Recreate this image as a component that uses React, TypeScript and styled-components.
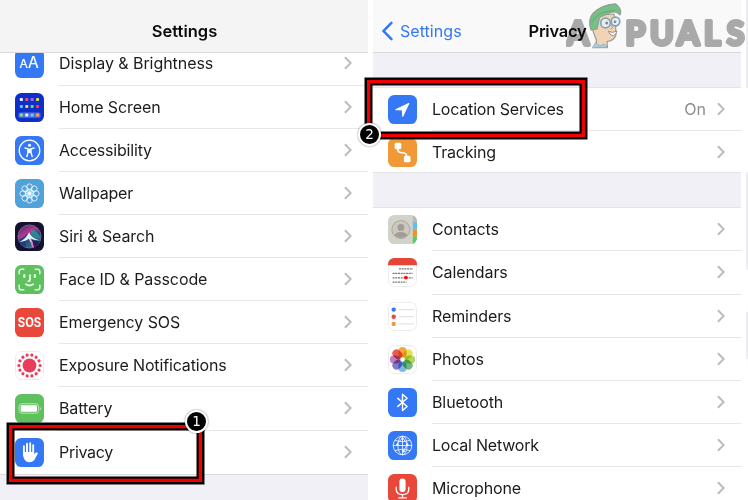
import React from "react";
import styled, { createGlobalStyle } from "styled-components";

const Global = createGlobalStyle`
  * { box-sizing: border-box; }
  body { margin: 0; background: #fff; overflow: hidden; }
`;

const Screen = styled.main`
  position: relative;
  display: grid;
  grid-template-columns: 368px 368px 2px;
  column-gap: 5px;
  width: 748px;
  height: 500px;
  overflow: hidden;
  background: #fff;
  color: #1c1c1e;
  font-family: Inter, "Liberation Sans", sans-serif;
  font-size: 16px;
`;

const Panel = styled.section`
  display: flex;
  flex-direction: column;
  min-width: 0;
  height: 500px;
  overflow: hidden;
  background: #fff;
`;

const Header = styled.header<{ $tone: string }>`
  flex: none;
  display: grid;
  grid-template-columns: 1fr auto 1fr;
  align-items: center;
  height: 53px;
  padding: 10px 8px 0 9px;
  background: ${(p) => p.$tone};
  border-bottom: 1px solid #dadadc;
  z-index: 1;
`;

const Title = styled.h1<{ $spacing: number }>`
  grid-column: 2;
  margin: 0;
  font-size: 16.5px;
  line-height: 20px;
  font-weight: 600;
  color: #0b0b0c;
  letter-spacing: ${(p) => p.$spacing}px;
`;

const Back = styled.a`
  display: flex;
  align-items: center;
  gap: 7px;
  color: #3478f6;
  letter-spacing: 0.05px;
`;

const List = styled.ul<{ $scrolled?: boolean }>`
  flex: none;
  list-style: none;
  margin: ${(p) => (p.$scrolled ? "-10.6px" : "0")} 0 0;
  padding: 0;
`;

const Gap = styled.div<{ $height: number; $overlap?: number }>`
  flex: none;
  height: ${(p) => p.$height}px;
  margin-top: -${(p) => p.$overlap ?? 0}px;
  background: #f1f0f6;
  border-bottom: 1px solid #e4e4e8;
  border-top: ${(p) => (p.$overlap ? "1px solid #e4e4e8" : "none")};
`;

const Fill = styled.div`
  flex: 1;
  background: #f1f0f6;
  border-top: 1px solid #dcdce0;
`;

const Row = styled.li`
  display: flex;
  height: 43.14px;
  padding-left: 15px;
  gap: 15px;
  &:last-child > div { border-bottom-color: transparent; }
`;

const IconTile = styled.svg`
  flex: none;
  align-self: center;
  width: 29px;
  height: 29px;
`;

const Content = styled.div`
  flex: 1;
  display: flex;
  align-items: center;
  padding-right: 16px;
  border-bottom: 1px solid #e7e7e9;
`;

const Label = styled.span<{ $spacing: number }>`
  flex: 1;
  white-space: nowrap;
  letter-spacing: ${(p) => p.$spacing}px;
`;

const Value = styled.span`
  margin-right: 11px;
  color: #8e8e92;
`;

const Arrow = styled.svg`
  width: 8px;
  height: 14px;
  fill: none;
  stroke: #bcbcc0;
  stroke-width: 2;
`;

const StripBlock = styled.div<{ $height: number; $tinted?: boolean }>`
  flex: none;
  height: ${(p) => p.$height}px;
  background: ${(p) => (p.$tinted ? "#eeedf3" : "#fff")};
`;

const Callout = styled.div<{ $x: number; $y: number; $w: number; $h: number }>`
  position: absolute;
  z-index: 2;
  left: ${(p) => p.$x}px;
  top: ${(p) => p.$y}px;
  width: ${(p) => p.$w}px;
  height: ${(p) => p.$h}px;
  border: 2px solid #000;
  box-shadow: inset 0 0 0 3.3px #f00000, inset 0 0 0 5.5px #000, 0 0 0 0.6px #333;
`;

const Badge = styled.span<{ $x: number; $y: number }>`
  position: absolute;
  z-index: 3;
  left: ${(p) => p.$x}px;
  top: ${(p) => p.$y}px;
  width: 23px;
  height: 23px;
  display: flex;
  align-items: center;
  justify-content: center;
  border: 2px solid #fff;
  border-radius: 50%;
  background: #000;
  box-shadow: 0 0 2px rgba(0, 0, 0, 0.55);
  color: #fff;
  font: 13.5px/19px "DejaVu Sans", sans-serif;
`;

const Watermark = styled.div`
  position: absolute;
  z-index: 2;
  left: 566px;
  top: 0;
  width: 182px;
  height: 60px;
  mix-blend-mode: multiply;
  svg { display: block; }
  text {
    font: 700 32px Lato, sans-serif;
    fill: #adadad;
    stroke: #adadad;
    stroke-width: 3.8;
    stroke-linejoin: round;
  }
`;

type IconName =
  | "display" | "home" | "access" | "wallpaper" | "siri" | "face" | "sos" | "exposure"
  | "battery" | "hand" | "location" | "tracking" | "contacts" | "calendar" | "reminders"
  | "photos" | "bluetooth" | "network" | "mic";

const BLUE = "#3478f6";
const GREEN = "#5ec15d";

const ring = (n: number, f: (a: number, i: number) => React.ReactNode) =>
  Array.from({ length: n }, (_, i) => f((i * 360) / n, i));

const homeColors = [
  "#f4f4ff", "#ff4f5e", "#b65cf0", "#d6e04a",
  "#58c8fa", "#ffd338", "#59dd7c", "#ff4338",
  "#7ee08a", "#e8f0ff", "#63cdf7", "#ff9a5a",
];

const petals = ["#f39a2d", "#e3de35", "#a5cf4d", "#5cb26a", "#6aaee0", "#6d6bbd", "#b86cb5", "#e6453c"];

const backgrounds: Record<IconName, string> = {
  display: BLUE, home: "#0f2fcb", access: BLUE, wallpaper: "#50a2d8", siri: "#15122f",
  face: GREEN, sos: "#e9473a", exposure: "#fff", battery: GREEN, hand: BLUE, location: BLUE,
  tracking: "#f09a37", contacts: "#d2d2c8", calendar: "#fff", reminders: "#fff", photos: "#fff",
  bluetooth: BLUE, network: BLUE, mic: "#e9473a",
};

const art: Record<IconName, React.ReactNode> = {
  display: (
    <g fill="#fff" stroke="#fff" strokeWidth="0.2" fontFamily="Inter, sans-serif">
      <text x="4.4" y="19" fontSize="12">A</text>
      <text x="13" y="19" fontSize="15.5">A</text>
    </g>
  ),
  home: (
    <>
      <rect x="3.5" y="19.4" width="22" height="5.4" rx="1.6" fill="#6b83e4" opacity="0.75" />
      {homeColors.map((c, i) => (
        <rect key={i} x={4.8 + (i % 4) * 5.4} y={[4.9, 11.9, 20.5][Math.floor(i / 4)]} width="3.1" height="3.1" rx="0.9" fill={c} />
      ))}
    </>
  ),
  access: (
    <g fill="none" stroke="#fff" strokeLinecap="round" strokeLinejoin="round">
      <circle cx="14.5" cy="14.5" r="10.3" strokeWidth="1.2" />
      <circle cx="14.5" cy="9.2" r="1.5" fill="#fff" stroke="none" />
      <path d="M10 12l3.2.9v3.2l-1.4 4.4M19 12l-3.2.9v3.2l1.4 4.4" strokeWidth="1.4" />
      <path d="M13.1 13.1h2.8v3.400h-2.800z" fill="#fff" strokeWidth="1" />
    </g>
  ),
  wallpaper: (
    <g fill="none" stroke="#e9f6ff" strokeWidth="0.9">
      {ring(8, (a) => (
        <ellipse key={a} cx="14.5" cy="8" rx="2.8" ry="3.1" transform={`rotate(${a} 14.5 14.5)`} />
      ))}
      {ring(8, (a) => (
        <ellipse key={a} cx="14.5" cy="11.6" rx="1.5" ry="2" strokeWidth="0.7" transform={`rotate(${a + 22.5} 14.5 14.5)`} />
      ))}
      <circle cx="14.5" cy="14.5" r="1.5" fill="#e9f6ff" />
    </g>
  ),
  siri: (
    <>
      <defs>
        <linearGradient id="orb" x1="0.2" y1="0" x2="0.8" y2="1">
          <stop offset="0" stopColor="#53306f" />
          <stop offset="0.35" stopColor="#b03a90" />
          <stop offset="0.55" stopColor="#3b4478" />
          <stop offset="1" stopColor="#1c7f92" />
        </linearGradient>
      </defs>
      <circle cx="14.5" cy="14.5" r="11.6" fill="url(#orb)" stroke="#73779f" strokeWidth="0.7" />
      <path d="M3.600 17.500Q8 17 13 11.500q-3.500 7-2 13.500Q4.700 23.500 3.600 17.500z" fill="#213a86" />
      <path d="M16 7Q23 9 25.500 16q-5 1.500-9.500-3z" fill="#2c8f96" opacity="0.85" />
      <path d="M17 17.500q4 2.500 8 1.500-2 5-6.500 6.500z" fill="#241c50" />
      <path d="M15.500 15.500q2.500 4 3.500 10l-2-.5q-1.500-5-3-8z" fill="#e079c4" />
      <path d="M4.300 20Q11 17 14.200 10.300q1.800 5.700 10.300 8-6 .2-9.300-2.100l1.300 4.300q-1.700-1.500-2.500-3.700-3.700 2.900-9.700 3.200z" fill="#d4fbff" />
    </>
  ),
  face: (
    <g fill="none" stroke="#e9ffe6" strokeWidth="1.5" strokeLinecap="round">
      <path d="M4.2 8.8V6.6q0-2.400 2.400-2.400h2.200M20.200 4.200h2.200q2.400 0 2.400 2.400v2.200M24.800 20.200v2.200q0 2.400-2.400 2.400h-2.200M8.800 24.800H6.600q-2.400 0-2.400-2.400v-2.200" />
      <path d="M9.3 10.2v1.800M19.8 10.2v1.800" strokeWidth="2.2" />
      <path d="M15 10.200v4.700q0 1.300-1.600 1.300M10.900 19.200q3.600 2.600 7.300 0" strokeWidth="1.800" />
    </g>
  ),
  sos: (
    <text x="14.5" y="19" textAnchor="middle" textLength="23.5" lengthAdjust="spacingAndGlyphs" fontFamily="Inter, sans-serif" fontWeight="700" fontSize="13" fill="#fff">SOS</text>
  ),
  exposure: (
    <g fill="#ea3d5b">
      <circle cx="14.5" cy="14.5" r="6.9" />
      {ring(14, (a) => (
        <circle key={a} cx="14.5" cy="3.900" r="1.6" transform={`rotate(${a + 12.800} 14.500 14.500)`} />
      ))}
    </g>
  ),
  battery: (
    <>
      <rect x="4.1" y="9.8" width="19.5" height="9.4" rx="2.6" fill="none" stroke="#b9e9b5" strokeWidth="1" />
      <rect x="5.700" y="11.300" width="16.300" height="6.400" rx="1.200" fill="#fff" />
      <path d="M24.900 12.500q1.600 2 0 4z" fill="#cdf1c8" />
    </>
  ),
  hand: (
    <g stroke="#fff" fill="none" strokeLinecap="round" strokeLinejoin="round">
      <path d="M8.900 8.200v9M12 5.800V16M15.200 5.300V16M18.200 7.200v10" strokeWidth="1.9" />
      <path d="M8.600 14.500q0 9.200 6 9.200 3.400 0 5-3.400l2.700-5q-1-.8-2.300.9l-1.700 2.200v-3.800z" fill="#fff" strokeWidth="1.200" />
    </g>
  ),
  location: <path d="M7.600 14.700L21 8.300l-6.300 13.200-.3-6.600z" fill="#fff" stroke="#fff" strokeWidth="1" strokeLinejoin="round" />,
  tracking: (
    <>
      <path d="M9.800 8.800v2.800q0 2.600 2.600 2.900l3.400.4q2.800.4 2.800 3v2" fill="none" stroke="#fff" strokeWidth="1.500" />
      <rect x="6.700" y="4.800" width="6.600" height="6.400" rx="1.500" fill="#fff" />
      <rect x="15.900" y="17.800" width="6.600" height="6.400" rx="1.500" fill="#fff" />
    </>
  ),
  contacts: (
    <>
      <path d="M24.8 0H29v8h-4.200z" fill="#b9b8b2" />
      <path d="M24.800 7.600H29v7h-4.200z" fill="#62bdf2" />
      <path d="M24.800 14.600H29v7h-4.200z" fill="#ee9329" />
      <path d="M24.800 21.600H29V29h-4.200z" fill="#5acb5e" />
      <circle cx="12.900" cy="14.600" r="9" fill="#cac9c0" stroke="#aaa69e" strokeWidth="1" />
      <circle cx="12.900" cy="12.400" r="3.400" fill="#a29c96" />
      <path d="M6.400 20q1.700-2.900 6.500-2.900t6.500 2.900q-2.600 3-6.500 3t-6.500-3z" fill="#a29c96" />
    </>
  ),
  calendar: (
    <>
      <path d="M0 0h29v7.200H0z" fill="#e54537" />
      <g stroke="#77777c" strokeWidth="1.300" strokeDasharray="2 0.700">
        <path d="M11 10.900h14M4.600 15.400h20M4.600 19.800h20M4.600 24.200h14" />
      </g>
      <circle cx="17.900" cy="19.600" r="1.900" fill="#f0150c" />
    </>
  ),
  reminders: (
    <>
      <path d="M11 7.600h15M11 14.700h15M11 21.900h15" stroke="#dedee1" strokeWidth="1" />
      <circle cx="5.700" cy="7.600" r="2.200" fill="#347cf6" />
      <circle cx="5.700" cy="14.700" r="2.200" fill="#ea4b3d" />
      <circle cx="5.700" cy="21.900" r="2.200" fill="#f09a37" />
    </>
  ),
  photos: (
    <>
      {ring(8, (a, i) => (
        <Petal key={a} x="10.400" y="1.900" width="8.200" height="10.600" rx="4.100" fill={petals[i]} opacity="0.880" transform={`rotate(${a} 14.500 14.500)`} />
      ))}
    </>
  ),
  bluetooth: <path d="M9.300 9.900l9.800 8.600-4.600 4.100V6.200l4.600 4.100-9.800 8.600" fill="none" stroke="#fff" strokeWidth="1.400" strokeLinejoin="round" />,
  network: (
    <g fill="none" stroke="#e6f0ff" strokeWidth="0.900">
      <circle cx="14.500" cy="14.500" r="9.300" />
      <ellipse cx="14.500" cy="14.500" rx="4.600" ry="9.300" />
      <path d="M14.500 5v19M5 14.500h19M6.800 9.400q7.700 3 15.400 0M6.800 19.600q7.700-3 15.400 0M9 13l5.500-6 5 6-4 7" />
      <g fill="#fff" stroke="none">
        <circle cx="14.500" cy="7.500" r="1.100" /><circle cx="9.400" cy="13.800" r="1.200" />
        <circle cx="19.300" cy="13.800" r="1.200" /><circle cx="15.500" cy="20.200" r="1.200" />
      </g>
    </g>
  ),
  mic: (
    <>
      <rect x="11.400" y="4.600" width="6.200" height="13.400" rx="3.100" fill="#fff" />
      <path d="M8.200 13.200v1.800q0 5.600 6.300 5.600t6.300-5.600v-1.800M14.500 20.600v3M10.600 23.800h7.800" fill="none" stroke="#fff" strokeWidth="1.300" strokeLinecap="round" />
    </>
  ),
};

function Petal(props: React.SVGProps<SVGRectElement>) {
  return <BlendedRect {...props} />;
}

const BlendedRect = styled.rect`
  mix-blend-mode: multiply;
`;

const Icon = ({ name }: { name: IconName }) => {
  const bordered = backgrounds[name] === "#fff";
  return (
    <IconTile viewBox="0 0 29 29">
      <clipPath id={`clip-${name}`}>
        <rect width="29" height="29" rx="6.3" />
      </clipPath>
      <g clipPath={`url(#clip-${name})`}>
        <rect width="29" height="29" fill={backgrounds[name]} />
        {bordered && <rect x="0.5" y="0.5" width="28" height="28" rx="5.8" fill="none" stroke="#ececee" />}
        {art[name]}
      </g>
    </IconTile>
  );
};

type Item = { icon: IconName; label: string; spacing?: number; value?: string };

const SettingRow = ({ icon, label, spacing = -0.1, value }: Item) => (
  <Row>
    <Icon name={icon} />
    <Content>
      <Label $spacing={spacing}>{label}</Label>
      {value && <Value>{value}</Value>}
      <Arrow viewBox="0 0 8 14">
        <path d="M0.9 1.2L6.7 7 0.9 12.8" />
      </Arrow>
    </Content>
  </Row>
);

const settings: Item[] = [
  { icon: "display", label: "Display & Brightness", spacing: -0.06 },
  { icon: "home", label: "Home Screen" },
  { icon: "access", label: "Accessibility", spacing: -0.2 },
  { icon: "wallpaper", label: "Wallpaper", spacing: -0.2 },
  { icon: "siri", label: "Siri & Search" },
  { icon: "face", label: "Face ID & Passcode" },
  { icon: "sos", label: "Emergency SOS" },
  { icon: "exposure", label: "Exposure Notifications", spacing: -0.14 },
  { icon: "battery", label: "Battery" },
  { icon: "hand", label: "Privacy", spacing: -0.3 },
];

const tracking: Item[] = [
  { icon: "location", label: "Location Services", spacing: -0.2, value: "On" },
  { icon: "tracking", label: "Tracking", spacing: -0.22 },
];

const privacy: Item[] = [
  { icon: "contacts", label: "Contacts" },
  { icon: "calendar", label: "Calendars" },
  { icon: "reminders", label: "Reminders" },
  { icon: "photos", label: "Photos" },
  { icon: "bluetooth", label: "Bluetooth" },
  { icon: "network", label: "Local Network", spacing: -0.22 },
  { icon: "mic", label: "Microphone", spacing: -0.16 },
];

const Mascot = () => (
  <g strokeLinejoin="round" strokeLinecap="round">
    <path d="M29 47.500l1.500-7-3-8-2.500-8.500 9-9 14-1 1.500 9 .5 12q-2 6-9 6.500l.5 6z" fill="#f5d3ae" stroke="#8b8f8b" strokeWidth="1.200" />
    <path d="M26.500 47.500l3-5 4.500 3.500 4-2 3.500 3.500z" fill="#9ccbe4" stroke="#8b9aa2" strokeWidth="0.800" />
    <path d="M25 30Q21.500 20 27 13.500 34 5 49.500 3.800q7 5.700 4.500 11.200Q50 9.500 42 13.500L33.500 17.500 31 29z" fill="#62ba74" stroke="#83958a" strokeWidth="1.200" />
    <path d="M26 22Q31 11 49 10.500" fill="none" stroke="#4f9e62" strokeWidth="1" />
    <circle cx="39.500" cy="23" r="4.800" fill="#eef3f6" stroke="#6f99b5" strokeWidth="1.700" />
    <circle cx="49.500" cy="21.500" r="4.300" fill="#eef3f6" stroke="#6f99b5" strokeWidth="1.700" />
    <circle cx="40.700" cy="23" r="1.500" fill="#6a7c86" />
    <circle cx="49" cy="21.800" r="1.400" fill="#6a7c86" />
    <path d="M45 25.500q3 2 0 3.500" fill="none" stroke="#a48e76" strokeWidth="1" />
    <path d="M42.500 31.500q4 2 8.500-.5-2 5.500-5 4.500-2.500-.7-3.500-4z" fill="#fff" stroke="#967f70" strokeWidth="1" />
  </g>
);

export default function App() {
  return (
    <Screen>
      <Global />
      <Panel>
        <Header $tone="#f4f4f4">
          <Title $spacing={0}>Settings</Title>
        </Header>
        <List $scrolled>
          {settings.map((s) => <SettingRow key={s.label} {...s} />)}
        </List>
        <Fill />
      </Panel>
      <Panel>
        <Header $tone="#f9f9f9">
          <Back>
            <svg width="11" height="20" viewBox="0 0 11 20" fill="none" stroke={BLUE} strokeWidth="2.5" strokeLinecap="round">
              <path d="M9.400 1.800L1.600 10l7.800 8.200" />
            </svg>
            Settings
          </Back>
          <Title $spacing={-0.25}>Privacy</Title>
        </Header>
        <Gap $height={34.5} />
        <List>
          {tracking.map((s) => <SettingRow key={s.label} {...s} />)}
        </List>
        <Gap $height={36.3} $overlap={1.8} />
        <List>
          {privacy.map((s) => <SettingRow key={s.label} {...s} />)}
        </List>
      </Panel>
      <Panel>
        <StripBlock $height={52} $tinted />
        <StripBlock $height={36} $tinted />
        <StripBlock $height={84} />
        <StripBlock $height={98} $tinted />
        <StripBlock $height={42} />
        <StripBlock $height={47} $tinted />
      </Panel>

      <Watermark>
        <svg width="182" height="60" viewBox="0 0 182 60">
          <text x="0.700" y="44.800">A</text>
          <text x="59.500 84 111 138 160.700" y="44.800">PUALS</text>
          <g opacity="0.850"><Mascot /></g>
        </svg>
      </Watermark>
      <Callout $x={7} $y={423} $w={197} $h={61} />
      <Badge $x={185} $y={410}>1</Badge>
      <Callout $x={365} $y={78} $w={222} $h={61} />
      <Badge $x={358} $y={123}>2</Badge>
    </Screen>
  );
}
